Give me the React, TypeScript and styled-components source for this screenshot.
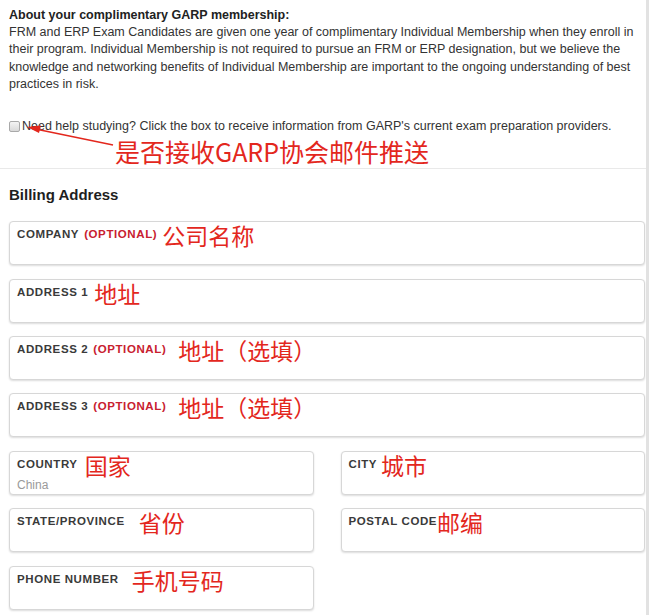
import React from "react";
import styled, { createGlobalStyle } from "styled-components";

const colors = {
  text: "#333333",
  label: "#3a3a3a",
  optional: "#c8202f",
  note: "#e3271d",
  border: "#d7d7d7",
  divider: "#e9e9e9",
  edge: "#e2e2e2",
  hint: "#9a9a9a",
};

const GlobalStyle = createGlobalStyle`
  html, body {
    margin: 0;
    padding: 0;
    background: #ffffff;
  }
  body {
    font-family: "Liberation Sans", Arial, "Noto Sans CJK SC", sans-serif;
    color: ${colors.text};
  }
`;

const Page = styled.div`
  width: 636px;
  padding: 0 1px 0 9px;
  border-right: 3px solid ${colors.edge};
  min-height: 615px;
  box-sizing: content-box;
`;

const Intro = styled.section`
  position: relative;
  padding-top: 7px;
  padding-bottom: 4px;
`;

const IntroTitle = styled.div`
  font-size: 12.5px;
  line-height: 17px;
  font-weight: bold;
  color: #222;
`;

const IntroText = styled.p`
  margin: 0;
  font-size: 12.5px;
  line-height: 17.3px;
  color: ${colors.text};
`;

const CheckRow = styled.label`
  display: flex;
  align-items: center;
  margin-top: 25px;
  font-size: 12.5px;
  line-height: 17px;
  color: ${colors.text};
`;

const Check = styled.input.attrs({ type: "checkbox" })`
  appearance: none;
  width: 11px;
  height: 11px;
  margin: 0 2px 0 0;
  border: 1px solid #a9a9a9;
  border-radius: 2px;
  background: linear-gradient(#f4f4f4, #d9d9d9);
  box-sizing: border-box;
`;

const Note = styled.span<{ $gap?: number; $size?: number }>`
  font-family: "Noto Sans CJK SC", "Liberation Sans", sans-serif;
  font-size: ${(p) => p.$size ?? 23}px;
  line-height: ${(p) => p.$size ?? 23}px;
  color: ${colors.note};
  margin-left: ${(p) => p.$gap ?? 6}px;
  white-space: nowrap;
`;

const FieldNote = styled(Note)`
  margin-top: -2px;
`;

const NoteLine = styled.div`
  margin-top: 4px;
  padding-left: 106px;
  height: 25px;
  display: flex;
  align-items: center;
`;

const Arrow = styled.svg`
  position: absolute;
  left: 0;
  top: 110px;
  width: 120px;
  height: 50px;
  overflow: visible;
`;

const Billing = styled.section`
  border-top: 1px solid ${colors.divider};
  margin: 0 -1px 0 -9px;
  padding: 17px 1px 0 9px;
`;

const BillingTitle = styled.h2`
  margin: 0 0 17px;
  font-size: 15px;
  line-height: 18px;
  font-weight: bold;
  color: #1e1e1e;
`;

const FieldGrid = styled.div`
  display: grid;
  grid-template-columns: 1fr 1fr;
  column-gap: 27px;
  row-gap: 13.4px;
`;

const Field = styled.div<{ $full?: boolean }>`
  grid-column: ${(p) => (p.$full ? "1 / -1" : "auto")};
  height: 44px;
  box-sizing: border-box;
  padding: 4px 7px;
  border: 1px solid ${colors.border};
  border-radius: 4px;
  background: #fff;
  box-shadow: 0 1px 2px rgba(0, 0, 0, 0.14);
`;

const LabelRow = styled.div`
  display: flex;
  align-items: flex-start;
`;

const Label = styled.span`
  margin-top: 2px;
  font-size: 11.5px;
  line-height: 13px;
  font-weight: bold;
  letter-spacing: 0.6px;
  color: ${colors.label};
  text-transform: uppercase;
  white-space: nowrap;
`;

const Optional = styled.span`
  color: ${colors.optional};
  margin-left: 5px;
`;

const Value = styled.div`
  margin-top: 1px;
  font-size: 12px;
  line-height: 14px;
  color: ${colors.hint};
`;

type FieldDef = {
  label: string;
  optional?: boolean;
  note: string;
  gap: number;
  full?: boolean;
  value?: string;
};

const fields: FieldDef[] = [
  { label: "Company", optional: true, note: "公司名称", gap: 5, full: true },
  { label: "Address 1", note: "地址", gap: 6, full: true },
  { label: "Address 2", optional: true, note: "地址（选填）", gap: 12, full: true },
  { label: "Address 3", optional: true, note: "地址（选填）", gap: 12, full: true },
  { label: "Country", note: "国家", gap: 7, value: "China" },
  { label: "City", note: "城市", gap: 4 },
  { label: "State/Province", note: "省份", gap: 14 },
  { label: "Postal Code", note: "邮编", gap: 0 },
  { label: "Phone Number", note: "手机号码", gap: 13 },
];

const App = () => {
  return (
    <>
      <GlobalStyle />
      <Page>
        <Intro>
          <IntroTitle>About your complimentary GARP membership:</IntroTitle>
          <IntroText>
            FRM and ERP Exam Candidates are given one year of complimentary
            Individual Membership when they enroll in their program. Individual
            Membership is not required to pursue an FRM or ERP designation, but
            we believe the knowledge and networking benefits of Individual
            Membership are important to the ongoing understanding of best
            practices in risk.
          </IntroText>
          <CheckRow>
            <Check />
            Need help studying? Click the box to receive information from
            GARP's current exam preparation providers.
          </CheckRow>
          <NoteLine>
            <Note $gap={0} $size={25}>
              是否接收GARP协会邮件推送
            </Note>
          </NoteLine>
          <Arrow viewBox="0 0 120 50">
            <line x1="104" y1="35" x2="24" y2="18.5" stroke={colors.note} strokeWidth="1.6" />
            <polygon points="18,17 32,15.5 30,23" fill={colors.note} />
          </Arrow>
        </Intro>

        <Billing>
          <BillingTitle>Billing Address</BillingTitle>
          <FieldGrid>
            {fields.map((f) => (
              <Field key={f.label} $full={f.full}>
                <LabelRow>
                  <Label>
                    {f.label}
                    {f.optional && <Optional>(Optional)</Optional>}
                  </Label>
                  <FieldNote $gap={f.gap}>{f.note}</FieldNote>
                </LabelRow>
                {f.value && <Value>{f.value}</Value>}
              </Field>
            ))}
          </FieldGrid>
        </Billing>
      </Page>
    </>
  );
};

export default App;
